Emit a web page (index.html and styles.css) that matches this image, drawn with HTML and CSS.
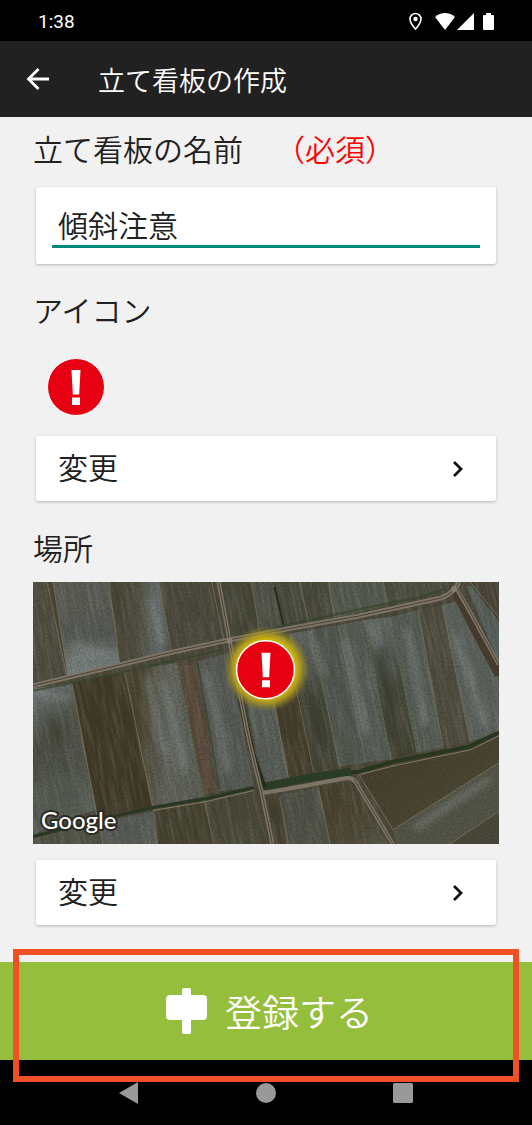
FILE: index.html
```html
<!DOCTYPE html>
<html lang="ja">
  <head>
    <meta charset="utf-8">
    <meta name="viewport" content="width=device-width, initial-scale=1">
    <title>立て看板の作成</title>
    <link rel="stylesheet" href="styles.css">
  </head>
  <body>
    <div class="status-bar">
      <span class="clock">1:38</span>
      <svg class="status-icons" width="88" height="20" viewBox="0 0 88 20" aria-hidden="true">
        <path d="M7.500 1.500a5.500 5.500 0 0 0-5.500 5.500c0 4 5.500 10 5.500 10s5.500-6 5.500-10a5.500 5.500 0 0 0-5.500-5.500z" fill="none" stroke="#fff" stroke-width="1.600"/>
        <circle cx="7.500" cy="7" r="2.200" fill="#fff"/>
        <path d="M27 5c5.500-5.300 14.500-5.300 20 0L37 18z" fill="#fff"/>
        <path d="M66 1v17H49z" fill="#fff"/>
        <path d="M78 1h5v2h2q1 0 1 1v13q0 1-1 1h-9q-1 0-1-1V4q0-1 1-1h2z" fill="#fff"/>
      </svg>
    </div>

    <header class="app-bar">
      <button type="button" class="back-btn" aria-label="戻る">
        <svg width="24" height="24" viewBox="0 0 24 24" aria-hidden="true">
          <path d="M23 12H3M12.500 2L2.500 12l10 10" fill="none" stroke="#fff" stroke-width="2.800"/>
        </svg>
      </button>
      <h1 class="app-title">立て看板の作成</h1>
    </header>

    <form class="page" id="signForm">
      <main class="content">
        <label class="label" for="signName">立て看板の名前<span class="required">（必須）</span></label>
        <div class="card name-card">
          <input type="text" id="signName" name="signName" class="name-input" value="傾斜注意" required>
        </div>

        <h2 class="label">アイコン</h2>
        <svg class="sign-icon" width="58" height="58" viewBox="0 0 58 58" role="img" aria-label="注意">
          <circle cx="29" cy="29" r="28.500" fill="#e60012" stroke="#fff" stroke-width="1"/>
          <path d="M24.500 12h9l-1.300 24.500h-6.400zM25 39.500h8V47h-8z" fill="#fff"/>
        </svg>
        <button type="button" class="card change-btn">
          変更
          <svg width="12" height="18" viewBox="0 0 12 18" aria-hidden="true">
            <path d="M2 2l7 7-7 7" fill="none" stroke="#111" stroke-width="2.800"/>
          </svg>
        </button>

        <h2 class="label">場所</h2>
        <svg class="map" viewBox="0 0 467 263" role="img" aria-label="地図">
          <defs>
            <linearGradient id="wetTop" x1="0" y1="0" x2="0" y2="1">
              <stop offset="0" stop-color="#595c53"/>
              <stop offset="0.550" stop-color="#565953"/>
              <stop offset="1" stop-color="#7c8585"/>
            </linearGradient>
            <linearGradient id="wetLeft" x1="0" y1="0" x2="0.300" y2="1">
              <stop offset="0" stop-color="#707978"/>
              <stop offset="0.400" stop-color="#4c4e43"/>
              <stop offset="1" stop-color="#5a6058"/>
            </linearGradient>
            <linearGradient id="fadeRight" x1="0" y1="0" x2="1" y2="0">
              <stop offset="0.150" stop-color="#4a432f"/>
              <stop offset="0.550" stop-color="#61645c"/>
              <stop offset="1" stop-color="#5a5e56"/>
            </linearGradient>
            <linearGradient id="fadeTop" x1="0" y1="0" x2="1" y2="0">
              <stop offset="0" stop-color="#45412f"/>
              <stop offset="0.450" stop-color="#4f4e41"/>
              <stop offset="0.800" stop-color="#666e6e"/>
              <stop offset="1" stop-color="#4b4a3b"/>
            </linearGradient>
            <linearGradient id="mixed" x1="0" y1="0" x2="0" y2="1">
              <stop offset="0" stop-color="#626965"/>
              <stop offset="0.500" stop-color="#45473b"/>
              <stop offset="1" stop-color="#444434"/>
            </linearGradient>
            <linearGradient id="brown" x1="0" y1="0" x2="1" y2="1">
              <stop offset="0" stop-color="#443e2a"/>
              <stop offset="0.600" stop-color="#4b4633"/>
              <stop offset="1" stop-color="#5a5a4d"/>
            </linearGradient>
            <radialGradient id="glow">
              <stop offset="0.650" stop-color="#d6bf08"/>
              <stop offset="0.780" stop-color="#bca51a" stop-opacity="0.850"/>
              <stop offset="1" stop-color="#948520" stop-opacity="0"/>
            </radialGradient>
            <filter id="streaks" x="0" y="0" width="1" height="1" color-interpolation-filters="sRGB">
              <feTurbulence type="fractalNoise" baseFrequency="0.300 0.025" numOctaves="3" seed="7"/>
              <feColorMatrix values="0 0 0 0 0.620  0 0 0 0 0.650  0 0 0 0 0.620  2.200 0 0 0 -0.900"/>
            </filter>
            <filter id="grain" x="0" y="0" width="1" height="1" color-interpolation-filters="sRGB">
              <feTurbulence type="fractalNoise" baseFrequency="0.500" numOctaves="2" seed="3"/>
              <feColorMatrix values="0 0 0 0 0.110  0 0 0 0 0.110  0 0 0 0 0.080  2.400 0 0 0 -0.900"/>
            </filter>
            <filter id="soft" x="-0.200" y="-0.200" width="1.400" height="1.400">
              <feGaussianBlur stdDeviation="3"/>
            </filter>
          </defs>

          <rect width="467" height="263" fill="#4a4738"/>

          <!-- fields above the main road -->
          <path d="M0 0h14l20 95L0 102z" fill="#4e4c3f"/>
          <path d="M20 0h56l11 82-52 12z" fill="url(#wetTop)"/>
          <path d="M76 0h50l13 70-52 13z" fill="url(#fadeTop)"/>
          <path d="M126 0h53l12 57-52 13z" fill="#4b483c"/>
          <path d="M188 0h31l8 50-28 8z" fill="#464637"/>
          <path d="M219 0h22l10 44-24 6z" fill="#4e5145"/>
          <path d="M241 0h55l6 36-51 9z" fill="#48493b"/>
          <path d="M296 0h55l4 23-53 13z" fill="#54594e"/>
          <path d="M351 0h66l-6 10-56 13z" fill="#4c4e42"/>

          <!-- fields between the main road and the ditch -->
          <path d="M0 107l39-6 26 126-65 26z" fill="url(#wetLeft)"/>
          <path d="M39 101l53-10 27 134-54 12z" fill="#403926"/>
          <path d="M92 91l52-10 27 134-52 10z" fill="url(#fadeRight)"/>
          <path d="M144 81h20l22 127-15 7z" fill="#554a3b"/>
          <path d="M164 80l32-9 25 134-35 5z" fill="#565954"/>
          <path d="M203 66l50-12 3 142-25 7z" fill="#575d57"/>
          <path d="M241 110l21-22 19 102-25 6z" fill="#443d2b"/>
          <path d="M256 52l23-4 28 137-26 5z" fill="url(#mixed)"/>
          <path d="M279 48l27-5 27 138-26 4z" fill="#51564e"/>
          <path d="M306 43l26-5 27 140-26 3z" fill="#565d55"/>
          <path d="M332 38l26-3 27 136-26 7z" fill="url(#mixed)"/>
          <path d="M358 35l28-7 25 138-26 5z" fill="#555c54"/>
          <path d="M386 28l24-5 28 137-27 6z" fill="#4e4c3f"/>
          <path d="M410 23l15-4 42 78v53l-29 10z" fill="#5b615c"/>
          <path d="M434 4h5l28 35v43z" fill="#565f5a"/>
          <path d="M439 0h28v36z" fill="#4b4439"/>

          <!-- fields below the ditch -->
          <path d="M0 257l67-16 3 22H0z" fill="#515145"/>
          <path d="M67 241l54-11 4 33H70z" fill="#585c56"/>
          <path d="M121 230l51-10 9 43h-56z" fill="#464230"/>
          <path d="M172 220l50-10 14 53h-55z" fill="#494737"/>
          <path d="M234 215l13-2 9 50h-14z" fill="#444030"/>
          <path d="M247 213l39-7 12 57h-42z" fill="#4f5146"/>
          <path d="M286 206l30-6 40 63h-58z" fill="url(#brown)"/>

          <!-- surface texture -->
          <rect x="-60" y="0" width="540" height="263" filter="url(#streaks)" opacity="0.240" transform="skewX(11)"/>

          <!-- large fields in the lower right corner -->
          <path d="M327 193l140-37v25l-106 67z" fill="url(#brown)"/>
          <path d="M361 248l106-67v49l-50 33h-53z" fill="#555649"/>
          <path d="M417 263l50-33v33z" fill="#4b493b"/>

          <!-- wet patches -->
          <g fill="none" stroke="#959e9f" stroke-width="7" stroke-linecap="round" opacity="0.400" filter="url(#soft)">
            <path d="M40 77l40-5M42 64l30 8M118 20l12 40"/>
            <path d="M4 112l30 4M115 98l16 70M131 100l20 85M175 92l20 95"/>
            <path d="M385 245l70-46M282 62l8 30M424 56l28 85M340 45l8 16M312 60l22 90M375 50l18 90"/>
          </g>
          <g fill="none" stroke="#2d3024" stroke-width="7" stroke-linecap="round" opacity="0.400" filter="url(#soft)">
            <path d="M20 140l10 50M277 100l12 60M347 75l18 80"/>
          </g>
          <rect width="467" height="263" filter="url(#grain)" opacity="0.220"/>

          <!-- narrow field edges -->
          <g fill="none" stroke="#857660" stroke-width="1" opacity="0.700">
            <path d="M14 0l20 95M20 0l15 94M76 0l11 82M126 0l13 70M179 0l12 57M219 0l8 50"/>
            <path d="M267 0l10 43M296 0l6 36M351 0l4 23"/>
            <path d="M39 101l26 138M92 91l28 134M144 81l27 134"/>
            <path d="M241 120l15 76M262 98l19 92M279 48l28 137M306 43l27 138M332 38l27 140"/>
            <path d="M358 35l27 136M386 28l25 138M410 23l28 137"/>
            <path d="M67 241l3 22M121 230l4 33M172 220l9 43M247 216l9 47M286 206l12 57"/>
            <path d="M327 193l34 56M361 248l106-67M417 263l50-33M438 0l29 35"/>
          </g>
          <path d="M242 5l9 38" stroke="#252b1d" stroke-width="2"/>
          <g fill="none" stroke="#35452b" stroke-width="2" opacity="0.700">
            <path d="M0 109l65-13 75-17 50-11M165 81l22 127"/>
            <path d="M199 74l18 94 12 38M226 49l52-11 50-11 60-12 25-8"/>
          </g>
          <g fill="none" stroke="#3d5a3a" stroke-width="2" stroke-dasharray="3 2" opacity="0.600">
            <path d="M144 81l27 134M333 45l24 125M360 45l24 118M281 60l20 105"/>
          </g>
          <path d="M155 84l21 124" stroke="#6f5241" stroke-width="6" stroke-dasharray="5 1" opacity="0.400"/>

          <!-- ditch -->
          <path d="M0 255l64-16 56-13 54-9 47-11" fill="none" stroke="#293722" stroke-width="3"/>
          <path d="M231 206l46-9 50-7 34-10 76-15 30-14" fill="none" stroke="#28351f" stroke-width="4"/>
          <path d="M232 205l45-9 42-6" fill="none" stroke="#2a3c24" stroke-width="8"/>
          <path d="M120 229l54-9 47-11M327 193l36-9 76-16 28-14" fill="none" stroke="#857b65" stroke-width="1"/>

          <!-- roads -->
          <g fill="none" stroke-linejoin="round">
            <path d="M421 4l20 40 26 49" stroke="#453a2c" stroke-width="9"/>
            <path d="M208 118l12 54 12 34" stroke="#252d20" stroke-width="5"/>
            <g stroke="#7d7466" stroke-width="4">
              <path d="M0 104l87-21 54-13 56-12 80-15 50-9 82-18q12-4 18-16" stroke-width="5"/>
              <path d="M423 4l20 35 24 44"/>
              <path d="M186 0l11 59 10 52 10 50 12 49 11 53"/>
              <path d="M230 211q3 1 81-14 8-2 12 3l38 63"/>
            </g>
            <g stroke="#484236" stroke-width="1">
              <path d="M0 104l87-21 54-13 56-12 80-15 50-9 82-18q12-4 18-16"/>
              <path d="M425 6l18 33 24 44M186 0l11 59 10 52 10 50 12 49 11 53M322 198l39 65"/>
            </g>
          </g>
          <circle cx="197" cy="59" r="3" fill="#857d6f"/>
          <circle cx="422" cy="7" r="3" fill="#857d6f"/>

          <!-- selected position -->
          <circle cx="234" cy="87" r="43" fill="url(#glow)"/>
          <circle cx="233" cy="88" r="29" fill="#e60012" stroke="#fff" stroke-width="1.500"/>
          <path d="M229 71h9l-1.300 24.500h-6.400zM229.500 98.500h8v7h-8z" fill="#fff"/>

          <text class="map-logo" x="8" y="248">Google</text>
        </svg>
        <button type="button" class="card change-btn">
          変更
          <svg width="12" height="18" viewBox="0 0 12 18" aria-hidden="true">
            <path d="M2 2l7 7-7 7" fill="none" stroke="#111" stroke-width="2.800"/>
          </svg>
        </button>
      </main>

      <div class="submit-area">
        <button type="submit" class="submit-btn">
          <svg width="42" height="46" viewBox="0 0 42 46" aria-hidden="true">
            <rect x="0" y="7" width="41" height="25" rx="4" fill="#fff"/>
            <rect x="16" y="0" width="9" height="46" rx="2" fill="#fff"/>
          </svg>
          登録する
        </button>
        <div class="highlight"></div>
      </div>
    </form>

    <nav class="nav-bar">
      <button type="button" class="nav-btn" aria-label="戻る">
        <svg width="22" height="24" viewBox="0 0 22 24"><path d="M20 1v22L1 12z" fill="#999"/></svg>
      </button>
      <button type="button" class="nav-btn" aria-label="ホーム">
        <svg width="22" height="24" viewBox="0 0 22 24"><circle cx="11" cy="12" r="10" fill="#999"/></svg>
      </button>
      <button type="button" class="nav-btn" aria-label="履歴">
        <svg width="22" height="24" viewBox="0 0 22 24"><rect x="1" y="2" width="20" height="20" rx="1.500" fill="#999"/></svg>
      </button>
    </nav>
  </body>
</html>
```

FILE: styles.css
```css
:root {
  --bar-color: #212121;
  --background-color: #f1f1f1;
  --text-color: #212121;
  --accent-color: #00897b;
  --submit-color: #94be3b;
  --highlight-color: #f15025;
  --required-color: #ff0000;
  --font-family: Roboto, "Noto Sans CJK JP", sans-serif;
}

* {
  box-sizing: border-box;
}

body {
  margin: 0;
  min-height: 100vh;
  display: flex;
  flex-direction: column;
  font-family: var(--font-family);
  font-weight: 350;
  color: var(--text-color);
  background-color: #000;
}

button,
input {
  font-family: inherit;
  font-weight: inherit;
  color: inherit;
}

button {
  border: none;
  cursor: pointer;
}

.status-bar {
  display: flex;
  align-items: center;
  justify-content: space-between;
  height: 41px;
  padding: 2px 36px 0 38px;
  color: #fff;
}

.clock {
  font-size: 19px;
  font-weight: 400;
}

.app-bar {
  display: flex;
  align-items: center;
  gap: 48px;
  height: 76px;
  padding: 0 26px;
  color: #fff;
  background-color: var(--bar-color);
}

.back-btn {
  display: flex;
  padding: 0;
  background: none;
}

.app-title {
  margin: 0;
  font-size: 27px;
  font-weight: inherit;
}

.page {
  flex: 1;
  display: flex;
  flex-direction: column;
}

.content {
  flex: 1;
  display: flex;
  flex-direction: column;
  padding: 12px 33px 36px;
  background-color: var(--background-color);
}

.label {
  margin: 0;
  font-size: 30px;
  font-weight: inherit;
  line-height: 44px;
}

.required {
  margin-left: 32px;
  color: var(--required-color);
}

.card {
  margin: 0 3px;
  border-radius: 2px;
  background-color: #fff;
  box-shadow: 0 1px 3px rgba(0, 0, 0, 0.25);
}

.name-card {
  margin-top: 14px;
  margin-bottom: 26px;
  padding: 16px;
}

.name-input {
  display: block;
  width: 100%;
  height: 45px;
  padding: 0 6px;
  border: none;
  border-bottom: 3px solid var(--accent-color);
  outline: none;
  font-size: 30px;
  background: none;
}

.sign-icon {
  margin: 24px 14px 20px;
}

.change-btn {
  display: flex;
  align-items: center;
  justify-content: space-between;
  height: 65px;
  padding: 0 32px 0 22px;
  font-size: 30px;
  line-height: 44px;
}

.change-btn + .label {
  margin-top: 27px;
}

.map {
  display: block;
  width: 100%;
  height: auto;
  margin: 10px 0 16px;
}

.map-logo {
  font-family: Lato, sans-serif;
  font-size: 24px;
  font-weight: 500;
  fill: #fff;
  stroke: #2b2b25;
  stroke-width: 4px;
  stroke-linejoin: round;
  paint-order: stroke;
}

.submit-area {
  position: relative;
}

.submit-btn {
  display: flex;
  align-items: center;
  justify-content: center;
  gap: 17px;
  width: 100%;
  height: 98px;
  padding: 0 0 0 7px;
  font-size: 37px;
  color: #fff;
  background-color: var(--submit-color);
}

/* frame drawn over the button and the edge of the navigation bar */
.highlight {
  position: absolute;
  z-index: 1;
  inset: -13px 13px -22px;
  border: 6px solid var(--highlight-color);
  pointer-events: none;
}

.nav-bar {
  display: flex;
  justify-content: center;
  gap: 115px;
  height: 65px;
}

.nav-btn {
  display: flex;
  align-items: center;
  padding: 0;
  background: none;
}
```
